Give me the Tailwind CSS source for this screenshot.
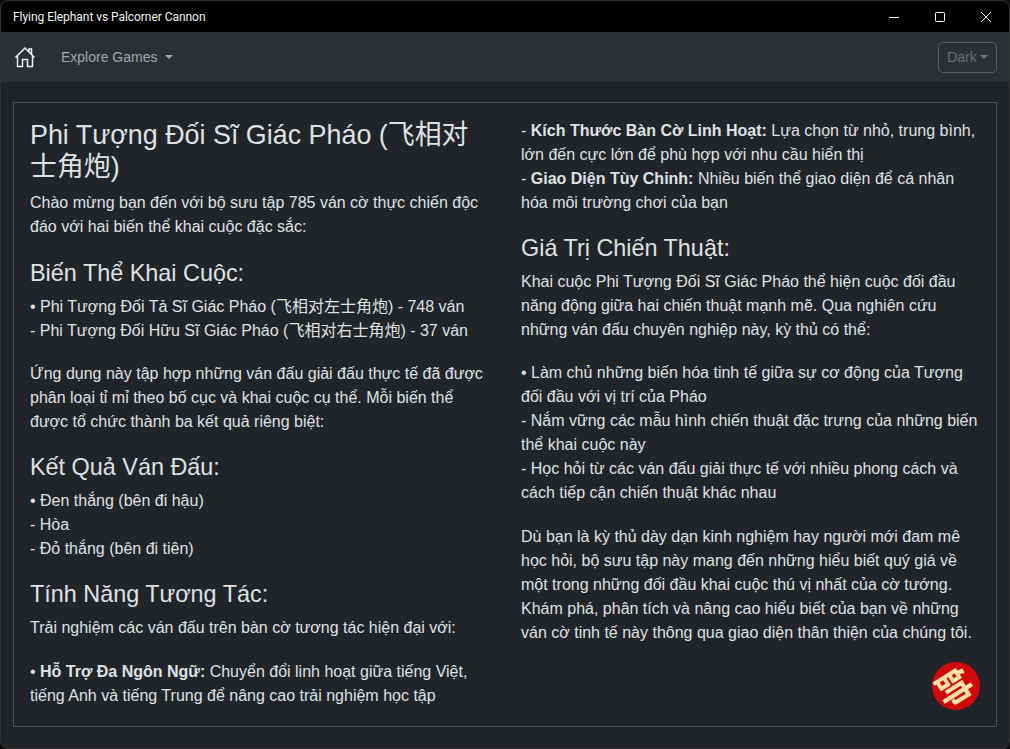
<!DOCTYPE html>
<html lang="en">
<head>
    <meta charset="UTF-8">
    <title>Flying Elephant vs Palcorner Cannon</title>
    <script src="https://cdn.jsdelivr.net/npm/@tailwindcss/browser@4"></script>
</head>
<body class="bg-[#0b0b0b] overflow-hidden">
    <div class="w-[1010px] h-[749px] flex flex-col rounded-lg overflow-hidden border border-[#333] font-['Liberation_Sans','Noto_Sans_CJK_SC',sans-serif] text-[#dee2e6] bg-[#212529] relative">
        <!-- Title bar -->
        <div class="h-[31px] bg-black flex items-center justify-between shrink-0">
            <span class="pl-[12px] pt-[1px] font-['Roboto',sans-serif] text-[12px] tracking-[-0.05px] text-[#f2f2f2]">Flying Elephant vs Palcorner Cannon</span>
            <div class="flex items-center text-white">
                <div class="w-[46px] h-[31px] flex items-center justify-center">
                    <svg width="10" height="10" viewBox="0 0 10 10"><path d="M0 5.5h10" stroke="currentColor" fill="none"/></svg>
                </div>
                <div class="w-[46px] h-[31px] flex items-center justify-center">
                    <svg width="10" height="10" viewBox="0 0 10 10"><rect x=".5" y=".5" width="9" height="9" rx="1" stroke="currentColor" fill="none"/></svg>
                </div>
                <div class="w-[46px] h-[31px] flex items-center justify-center">
                    <svg width="10" height="10" viewBox="0 0 10 10"><path d="M0 0l10 10M10 0L0 10" stroke="currentColor" fill="none"/></svg>
                </div>
            </div>
        </div>
        <!-- Nav -->
        <nav class="h-[50px] bg-[#2b3035] flex items-center justify-between pl-[13px] pr-[12px] shrink-0">
            <div class="flex items-center">
                <svg class="w-[22px] h-[22px] text-[#f0f0f0]" viewBox="0 0 22 22" fill="none" stroke="currentColor" stroke-width="1.5">
                    <path d="M1.5 11.5L11 2 20.5 11.5M3.5 9.5V20.5H8.5V13.5H13.5V20.5H18.5V9.5M15 5.5V3H17.5V8"/>
                </svg>
                <span class="ml-[25px] text-[14px] text-[#a5a7a9]">Explore Games</span>
                <span class="ml-[8px] w-0 h-0 border-x-[4px] border-x-transparent border-t-[4px] border-t-[#a5a7a9]"></span>
            </div>
            <div class="w-[59px] h-[31px] border border-[#5c6166] rounded-[5px] flex items-center justify-center text-[14px] text-[#6d7175]">
                Dark
                <span class="ml-[3px] w-0 h-0 border-x-[4px] border-x-transparent border-t-[4px] border-t-[#6d7175]"></span>
            </div>
        </nav>
        <!-- Content -->
        <main class="flex-1 px-[12px] pt-[20px] pb-[21px]">
            <div class="h-full border border-[#495057] px-[16px] pt-[16px] grid grid-cols-2 gap-8 relative">
                <div>
                    <h1 class="text-[26.88px] leading-[32.26px] mb-[7.93px]">Phi Tượng Đối Sĩ Giác Pháo (飞相对士角炮)</h1>
                    <p class="mb-[19.2px] leading-6 text-[16px]">Chào mừng bạn đến với bộ sưu tập 785 ván cờ thực chiến độc đáo với hai biến thể khai cuộc đặc sắc:</p>
                    <h2 class="text-[23.4px] leading-[28.08px] mb-2">Biến Thể Khai Cuộc:</h2>
                    <p class="mb-[19.2px] leading-6">• Phi Tượng Đối Tả Sĩ Giác Pháo (飞相对左士角炮) - 748 ván<br>- Phi Tượng Đối Hữu Sĩ Giác Pháo (飞相对右士角炮) - 37 ván</p>
                    <p class="mb-[19.2px] leading-6">Ứng dụng này tập hợp những ván đấu giải đấu thực tế đã được phân loại tỉ mỉ theo bố cục và khai cuộc cụ thể. Mỗi biến thể được tổ chức thành ba kết quả riêng biệt:</p>
                    <h2 class="text-[23.4px] leading-[28.08px] mb-2">Kết Quả Ván Đấu:</h2>
                    <p class="mb-[19.2px] leading-6">• Đen thắng (bên đi hậu)<br>- Hòa<br>- Đỏ thắng (bên đi tiên)</p>
                    <h2 class="text-[23.4px] leading-[28.08px] mb-2">Tính Năng Tương Tác:</h2>
                    <p class="mb-[19.2px] leading-6">Trải nghiệm các ván đấu trên bàn cờ tương tác hiện đại với:</p>
                    <p class="leading-6">• <b>Hỗ Trợ Đa Ngôn Ngữ:</b> Chuyển đổi linh hoạt giữa tiếng Việt, tiếng Anh và tiếng Trung để nâng cao trải nghiệm học tập</p>
                </div>
                <div>
                    <p class="mb-[19.2px] leading-6">- <b>Kích Thước Bàn Cờ Linh Hoạt:</b> Lựa chọn từ nhỏ, trung bình, lớn đến cực lớn để phù hợp với nhu cầu hiển thị<br>- <b>Giao Diện Tùy Chỉnh:</b> Nhiều biến thể giao diện để cá nhân hóa môi trường chơi của bạn</p>
                    <h2 class="text-[23.4px] leading-[28.08px] mb-2">Giá Trị Chiến Thuật:</h2>
                    <p class="mb-[19.2px] leading-6">Khai cuộc Phi Tượng Đối Sĩ Giác Pháo thể hiện cuộc đối đầu năng động giữa hai chiến thuật mạnh mẽ. Qua nghiên cứu những ván đấu chuyên nghiệp này, kỳ thủ có thể:</p>
                    <p class="mb-[19.2px] leading-6">• Làm chủ những biến hóa tinh tế giữa sự cơ động của Tượng đối đầu với vị trí của Pháo<br>- Nắm vững các mẫu hình chiến thuật đặc trưng của những biến thể khai cuộc này<br>- Học hỏi từ các ván đấu giải thực tế với nhiều phong cách và cách tiếp cận chiến thuật khác nhau</p>
                    <p class="leading-6">Dù bạn là kỳ thủ dày dạn kinh nghiệm hay người mới đam mê học hỏi, bộ sưu tập này mang đến những hiểu biết quý giá về một trong những đối đầu khai cuộc thú vị nhất của cờ tướng. Khám phá, phân tích và nâng cao hiểu biết của bạn về những ván cờ tinh tế này thông qua giao diện thân thiện của chúng tôi.</p>
                </div>
                <!-- Badge -->
                <div class="absolute right-[16px] bottom-[16px] w-[48px] h-[48px] rounded-full bg-[#cf0a0a] flex items-center justify-center">
                    <span class="rotate-[58deg] text-[36px] leading-none font-bold text-[#fbe3a8] font-['Noto_Sans_CJK_TC',sans-serif]">帥</span>
                </div>
            </div>
        </main>
    </div>
</body>
</html>
